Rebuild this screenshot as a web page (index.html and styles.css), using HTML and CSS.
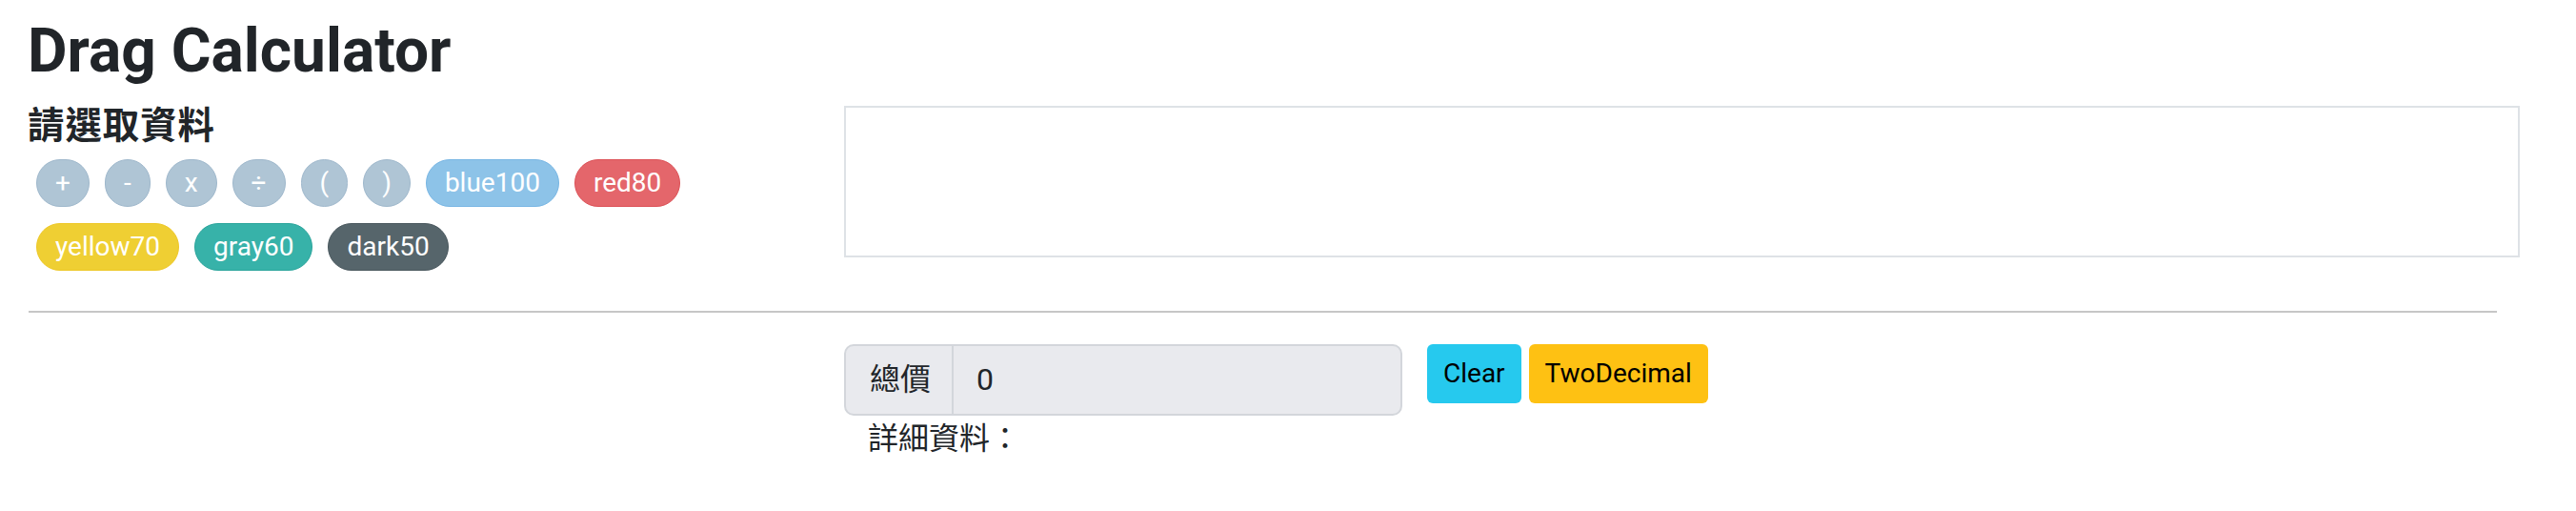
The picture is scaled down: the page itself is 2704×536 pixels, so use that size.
FILE: index.html
```html
<!DOCTYPE html>
<html lang="zh-Hant">
<head>
<meta charset="utf-8">
<title>Drag Calculator</title>
<link rel="stylesheet" href="styles.css">
</head>
<body>
<div class="page">
  <h1 class="title">Drag Calculator</h1>
  <div class="top">
    <div class="palette">
      <h4 class="subtitle">請選取資料</h4>
      <div class="pills">
        <span class="pill pill-op">+</span>
        <span class="pill pill-op">-</span>
        <span class="pill pill-op">x</span>
        <span class="pill pill-op">÷</span>
        <span class="pill pill-op">(</span>
        <span class="pill pill-op">)</span>
        <span class="pill pill-blue">blue100</span>
        <span class="pill pill-red">red80</span>
        <span class="pill pill-yellow">yellow70</span>
        <span class="pill pill-teal">gray60</span>
        <span class="pill pill-dark">dark50</span>
      </div>
    </div>
    <div class="dropzone"></div>
  </div>
  <hr class="divider">
  <div class="result">
    <div class="total-row">
      <div class="input-group">
        <span class="addon">總價</span>
        <span class="value">0</span>
      </div>
      <div class="actions">
        <button class="btn btn-clear">Clear</button>
        <button class="btn btn-two">TwoDecimal</button>
      </div>
    </div>
    <div class="details">詳細資料：</div>
  </div>
</div>
</body>
</html>
```
FILE: styles.css
```css
* { box-sizing: border-box; }

body {
  margin: 0;
  background: #fff;
  color: #212529;
  font-family: Roboto, "Noto Sans CJK TC", sans-serif;
}

.page {
  padding: 16px 0 0 29px;
}

.title {
  margin: 0;
  font-size: 64px;
  line-height: 76.8px;
  font-weight: 700;
  letter-spacing: 0;
}

.top {
  display: flex;
  margin-top: 16px;
}

.palette {
  width: 857px;
  flex: none;
}

.subtitle {
  margin: 0;
  font-size: 38.4px;
  line-height: 46px;
  font-weight: 700;
  letter-spacing: 1px;
}

.pills {
  display: flex;
  flex-wrap: wrap;
  gap: 17px 16px;
  margin-top: 12px;
  padding-left: 9px;
  width: 820px;
}

.pill {
  display: inline-block;
  font-size: 28px;
  line-height: 34px;
  padding: 7px 19px;
  border: 1px solid;
  border-radius: 26px;
  color: #fff;
}

.pill-op { background: #afc5d5; border-color: #9fb8cc; }
.pill-blue { background: #8dc3e8; border-color: #78b6e4; }
.pill-red { background: #e4666b; border-color: #dc5157; }
.pill-yellow { background: #efcf33; border-color: #eec828; }
.pill-teal { background: #37b2a9; border-color: #2ca59c; }
.pill-dark { background: #56656b; border-color: #4a585e; }

.dropzone {
  margin-top: 2px;
  width: 1759px;
  height: 159px;
  border: 2px solid #dee2e6;
  background: #fff;
}

.divider {
  margin: 42px 0 0 1px;
  width: 2591px;
  height: 2px;
  border: 0;
  background: #c6c6c6;
}

.result {
  padding-left: 857px;
  margin-top: 33px;
}

.total-row {
  display: flex;
  align-items: flex-start;
}

.input-group {
  display: flex;
  width: 586px;
  height: 75px;
  border: 2px solid #d3d6db;
  border-radius: 10px;
  background: #e9eaee;
  font-size: 32px;
  line-height: 48px;
  color: #212529;
}

.addon {
  width: 113px;
  padding: 11px 0 0 25px;
  border-right: 2px solid #d3d6db;
}

.value {
  padding: 11px 0 0 24px;
}

.actions {
  display: flex;
  gap: 8px;
  margin-left: 26px;
}

.btn {
  font-family: Roboto, sans-serif;
  font-size: 28px;
  line-height: 40px;
  height: 62px;
  padding: 11px 17px;
  border: 0;
  border-radius: 6px;
  color: #000;
}

.btn-clear { background: #26c9ee; }
.btn-two { background: #fec113; }

.details {
  padding-left: 25px;
  font-size: 32px;
  line-height: 48px;
  color: #212529;
}
```
